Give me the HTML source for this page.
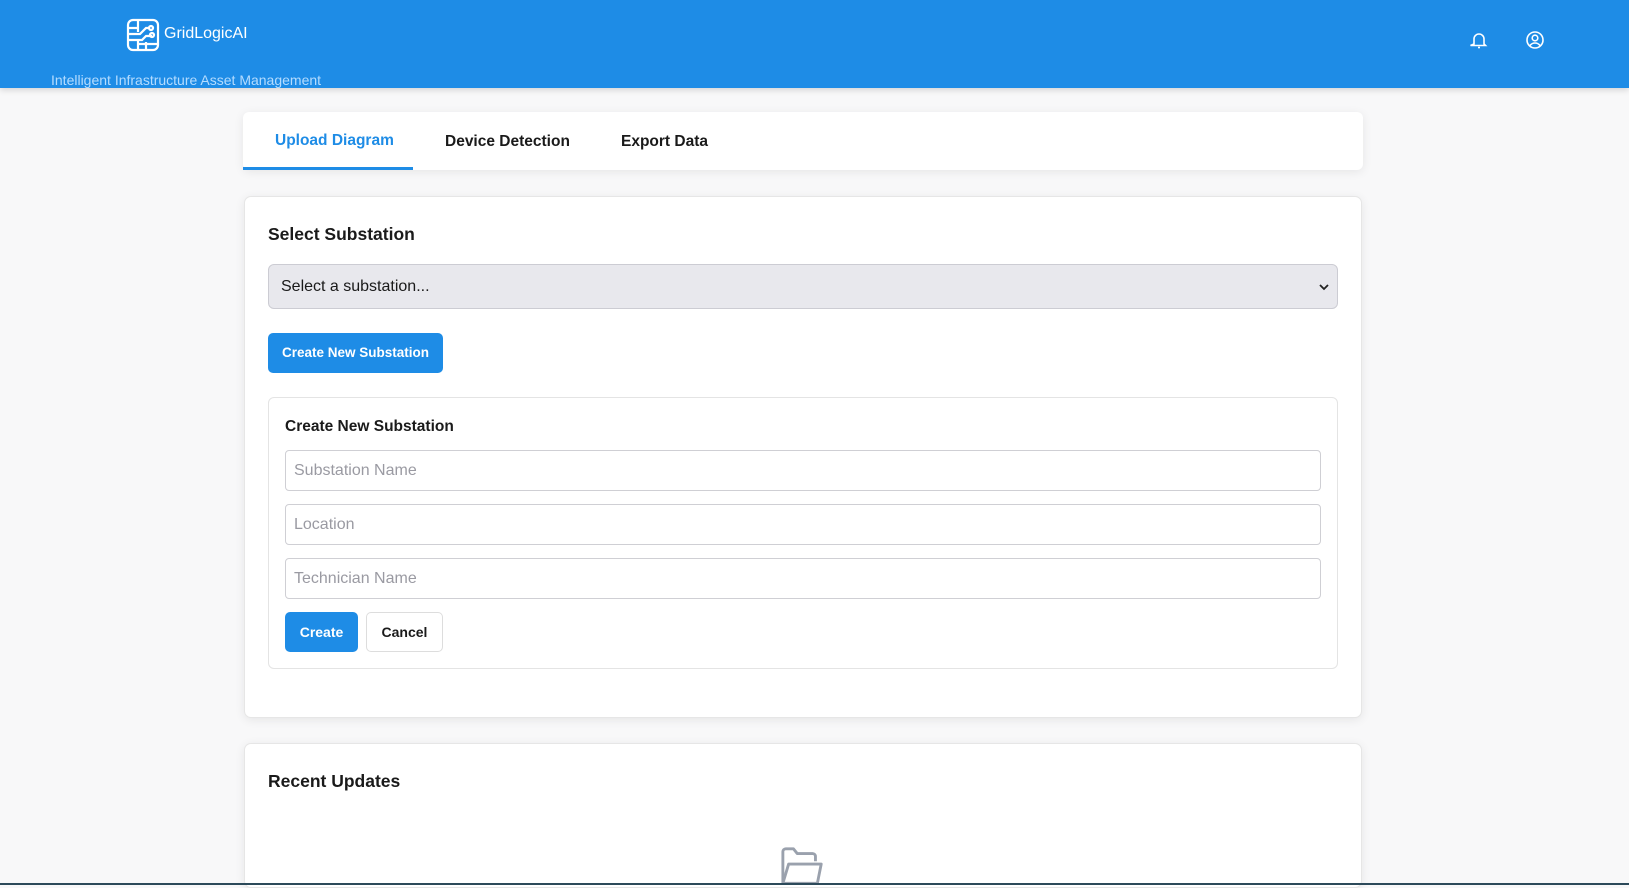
<!DOCTYPE html>
<html><head><style>
*{box-sizing:border-box;margin:0;padding:0}
body{width:1629px;height:885px;overflow:hidden;background:#f8f8f9;font-family:"Liberation Sans",Arial,sans-serif;position:relative;color:#1a1a1a}
.hdr{position:absolute;left:0;top:0;width:1629px;height:88px;background:#1e8ce6;box-shadow:0 2px 6px rgba(0,0,0,.15)}
.abs{position:absolute}
.card{position:absolute;background:#fff;border:1px solid #e6e6e6;border-radius:7px;box-shadow:0 2px 10px rgba(0,0,0,.08)}
.inp{position:absolute;left:285px;width:1036px;height:41px;border:1px solid #cfcfd4;border-radius:4px;background:#fff;font-size:16px;color:#9a9aa2;padding:11px 8px}
</style></head><body>
<div class="hdr">
<svg class="abs" style="left:126px;top:18px" width="34" height="34" viewBox="0 0 34 34" fill="none" stroke="#fff" stroke-width="2.2"><rect x="2" y="2" width="30" height="30" rx="5"/><path d="M12 2v12M2 10h10M2 16h12l6-6h4M2 22h14l4-4h6M12 22v10M20 24v8M12 26h20"/><circle cx="25" cy="10" r="2"/><circle cx="26" cy="17" r="2"/></svg>
<div class="abs" style="left:164px;top:25px;color:#fff;font-size:16px">GridLogicAI</div>
<div class="abs" style="left:51px;top:72px;color:#b4dcff;font-size:14px">Intelligent Infrastructure Asset Management</div>
<svg class="abs" style="left:1470px;top:31px" width="18" height="18" viewBox="0 0 18 18" fill="none" stroke="#fff" stroke-width="1.6"><path d="M4 13V8a5 5 0 0 1 10 0v5l1.5 1.5h-15z"/><path d="M8 16.5h2"/></svg>
<svg class="abs" style="left:1525px;top:30px" width="20" height="20" viewBox="0 0 20 20" fill="none" stroke="#fff" stroke-width="1.6"><circle cx="10" cy="10" r="8"/><circle cx="10" cy="8" r="2.8"/><path d="M5 15.5c1.5-2 3-2.5 5-2.5s3.5.5 5 2.5"/></svg>
</div>
<div class="card" style="left:243px;top:112px;width:1120px;height:58px;border:none;border-radius:6px">
<div class="abs" style="left:32px;top:20px;font-size:15.5px;color:#1e8ce6;font-weight:600">Upload Diagram</div>
<div class="abs" style="left:202px;top:21px;font-size:15.5px;font-weight:600">Device Detection</div>
<div class="abs" style="left:378px;top:21px;font-size:15.5px;font-weight:600">Export Data</div>
<div class="abs" style="left:0;top:55px;width:170px;height:3px;background:#1e8ce6"></div>
</div>
<div class="card" style="left:244px;top:196px;width:1118px;height:522px"></div>
<div class="abs" style="left:268px;top:224px;font-size:17.5px;font-weight:600">Select Substation</div>
<div class="abs" style="left:268px;top:264px;width:1070px;height:45px;background:#e8e8ed;border:1px solid #ccccd3;border-radius:6px;font-size:16px;padding:13px 12px">Select a substation...
<svg class="abs" style="right:8px;top:18px" width="10" height="8" viewBox="0 0 10 8" fill="none" stroke="#222" stroke-width="1.8"><path d="M1 2l4 4 4-4"/></svg></div>
<div class="abs" style="left:268px;top:333px;width:175px;height:40px;background:#1e8ce6;border-radius:5px;color:#fff;font-size:13.5px;font-weight:700;text-align:center;line-height:40px">Create New Substation</div>
<div class="abs" style="left:268px;top:397px;width:1070px;height:272px;border:1px solid #e4e4e4;border-radius:6px;background:#fff"></div>
<div class="abs" style="left:285px;top:418px;font-size:15.5px;font-weight:600">Create New Substation</div>
<div class="inp" style="top:450px">Substation Name</div>
<div class="inp" style="top:504px">Location</div>
<div class="inp" style="top:558px">Technician Name</div>
<div class="abs" style="left:285px;top:612px;width:73px;height:40px;background:#1e8ce6;border-radius:5px;color:#fff;font-size:14px;font-weight:700;text-align:center;line-height:40px">Create</div>
<div class="abs" style="left:366px;top:612px;width:77px;height:40px;border:1px solid #ddd;background:#fff;border-radius:5px;font-size:14px;font-weight:700;text-align:center;line-height:38px">Cancel</div>
<div class="card" style="left:244px;top:743px;width:1118px;height:145px"></div>
<div class="abs" style="left:268px;top:771px;font-size:17.5px;font-weight:600">Recent Updates</div>
<svg class="abs" style="left:780px;top:846px" width="46" height="40" viewBox="0 0 48 40" fill="none" stroke="#9aa1ad" stroke-width="3" stroke-linejoin="round"><path d="M3 38V5a3 3 0 0 1 3-3h8l4 5h16a3 3 0 0 1 3 3v5"/><path d="M3 38l6-20h34l-4 20z"/></svg>
<div class="abs" style="left:0;top:883px;width:1629px;height:2px;background:#2c4a5a"></div>
</body></html>
